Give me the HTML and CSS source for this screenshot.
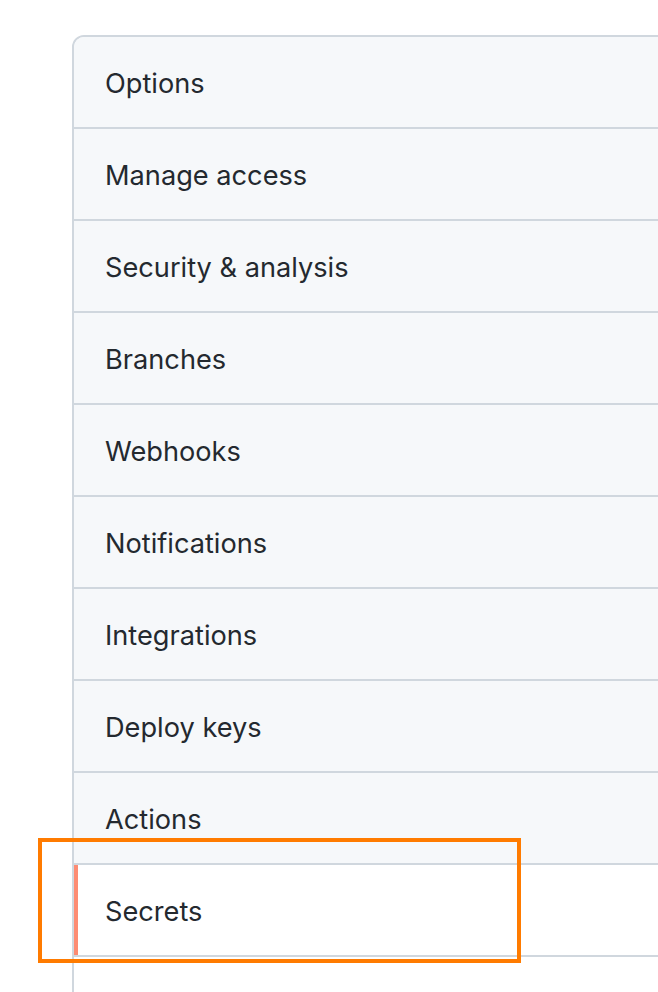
FILE: index.html
```html
<!DOCTYPE html>
<html>
<head>
<meta charset="utf-8">
<link rel="stylesheet" href="styles.css">
</head>
<body>
<div class="page">
  <nav class="menu">
    <a class="menu-item">Options</a>
    <a class="menu-item">Manage access</a>
    <a class="menu-item">Security &amp; analysis</a>
    <a class="menu-item">Branches</a>
    <a class="menu-item">Webhooks</a>
    <a class="menu-item">Notifications</a>
    <a class="menu-item">Integrations</a>
    <a class="menu-item">Deploy keys</a>
    <a class="menu-item">Actions</a>
    <a class="menu-item selected">Secrets</a>
    <div class="menu-rest"></div>
  </nav>
  <div class="highlight"></div>
</div>
</body>
</html>
```
FILE: styles.css
```css
html, body {
  margin: 0;
  padding: 0;
  background: #ffffff;
  overflow: hidden;
}
.page {
  position: relative;
  width: 658px;
  height: 992px;
  padding: 35px 0 0 72px;
  box-sizing: border-box;
  overflow: hidden;
  font-family: Inter, "Noto Sans", sans-serif;
}
.menu {
  display: flex;
  flex-direction: column;
  width: 600px;
  border: 2px solid #d0d7de;
  border-radius: 12px;
  overflow: hidden;
  background: #ffffff;
}
.menu-item {
  position: relative;
  display: flex;
  align-items: center;
  padding-left: 31px;
  padding-top: 2px;
  box-sizing: content-box;
  height: 88px;
  background: #f6f8fa;
  border-bottom: 2px solid #d0d7de;
  color: #24292f;
  font-size: 27.2px;
  text-decoration: none;
}
.menu-item.selected {
  background: #ffffff;
}
.menu-item.selected::before {
  content: "";
  position: absolute;
  left: 0;
  top: 0;
  bottom: 0;
  width: 4px;
  background: #fd8c73;
}
.menu-rest {
  height: 60px;
  background: #ffffff;
}
.highlight {
  position: absolute;
  left: 38px;
  top: 838px;
  width: 483px;
  height: 125px;
  box-sizing: border-box;
  border: 4px solid #ff7b00;
}
```
